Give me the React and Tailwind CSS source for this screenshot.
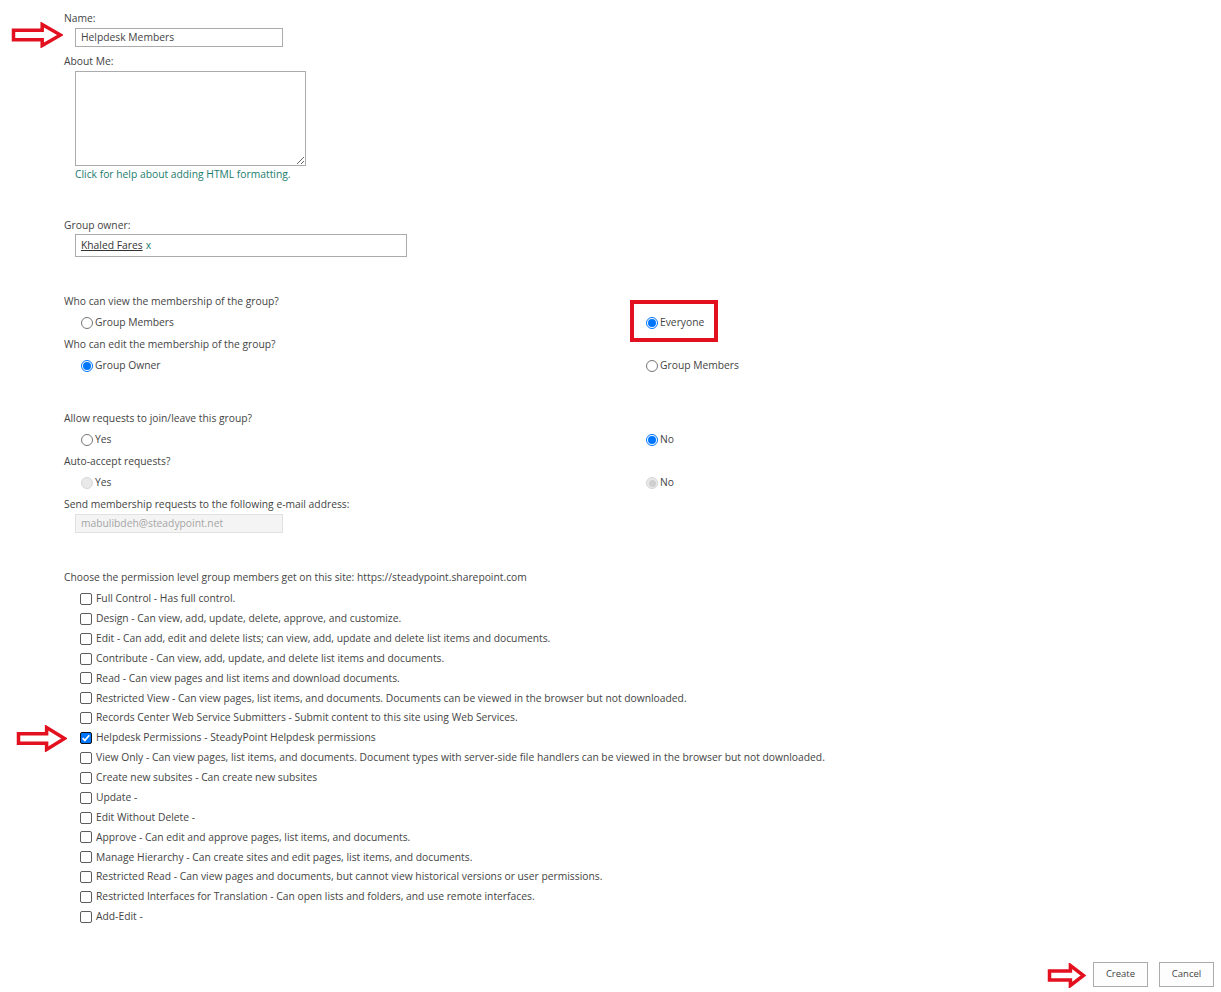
import React from "react";

const font = { fontFamily: '"Open Sans", "Noto Sans", sans-serif' };

function Arrow({ className, w = 52, h = 27 }) {
  return (
    <svg className={className} width={w} height={h} viewBox={`0 0 ${w} ${h}`}>
      <path
        d={`M2.5 ${h * 0.32} H${w * 0.6} V2.5 L${w - 2.5} ${h / 2} L${w * 0.6} ${h - 2.5} V${h * 0.68} H2.5 Z`}
        fill="#fff"
        stroke="#e3111f"
        strokeWidth="3.5"
        strokeLinejoin="miter"
      />
    </svg>
  );
}

function Radio({ checked, disabled, label }) {
  return (
    <div className="flex items-center h-[14px]">
      {disabled ? (
        <span className="w-[12px] h-[12px] rounded-full border border-[#d6d6d6] bg-[#e9e9e9] flex items-center justify-center">
          {checked && <span className="w-[7px] h-[7px] rounded-full bg-[#cfcfcf]" />}
        </span>
      ) : checked ? (
        <span className="w-[12px] h-[12px] rounded-full border border-[#0075ff] bg-white flex items-center justify-center">
          <span className="w-[8px] h-[8px] rounded-full bg-[#0075ff]" />
        </span>
      ) : (
        <span className="w-[12px] h-[12px] rounded-full border border-[#767676] bg-white" />
      )}
      <span className="ml-[2px] text-[#444]">{label}</span>
    </div>
  );
}

function Check({ checked, label }) {
  return (
    <div className="flex items-center h-[19.875px] pl-[16px]">
      {checked ? (
        <span className="w-[12px] h-[12px] rounded-[2px] bg-[#0075ff] border border-[#101010] flex items-center justify-center">
          <svg width="10" height="10" viewBox="0 0 10 10">
            <path d="M1.6 5.2 L3.9 7.4 L8.3 2.3" fill="none" stroke="#fff" strokeWidth="1.7" />
          </svg>
        </span>
      ) : (
        <span className="w-[12px] h-[12px] rounded-[2px] border border-[#5c5c5c] bg-white" />
      )}
      <span className="ml-[4px] text-[#444]">{label}</span>
    </div>
  );
}

const perms = [
  "Full Control - Has full control.",
  "Design - Can view, add, update, delete, approve, and customize.",
  "Edit - Can add, edit and delete lists; can view, add, update and delete list items and documents.",
  "Contribute - Can view, add, update, and delete list items and documents.",
  "Read - Can view pages and list items and download documents.",
  "Restricted View - Can view pages, list items, and documents. Documents can be viewed in the browser but not downloaded.",
  "Records Center Web Service Submitters - Submit content to this site using Web Services.",
  "Helpdesk Permissions - SteadyPoint Helpdesk permissions",
  "View Only - Can view pages, list items, and documents. Document types with server-side file handlers can be viewed in the browser but not downloaded.",
  "Create new subsites - Can create new subsites",
  "Update -",
  "Edit Without Delete -",
  "Approve - Can edit and approve pages, list items, and documents.",
  "Manage Hierarchy - Can create sites and edit pages, list items, and documents.",
  "Restricted Read - Can view pages and documents, but cannot view historical versions or user permissions.",
  "Restricted Interfaces for Translation - Can open lists and folders, and use remote interfaces.",
  "Add-Edit -",
];

function Label({ children, className = "" }) {
  return <div className={`h-[14px] leading-[14px] text-[#444] ${className}`}>{children}</div>;
}

function RadioRow({ left, right }) {
  return (
    <div className="flex h-[14px] mt-[8px]">
      <div className="w-[582px] pl-[17px]">{left}</div>
      <div>{right}</div>
    </div>
  );
}

export default function App() {
  return (
    <div className="relative w-[1221px] h-[992px] bg-white overflow-hidden text-[10.3px]" style={font}>
      <div className="pl-[64px] pt-[11px]">
        <Label>Name:</Label>
        <div className="mt-[3px] ml-[11px] w-[208px] h-[19px] border border-[#ababab] flex items-center pt-[1px] px-[5px] text-[#444]">
          Helpdesk Members
        </div>
        <Label className="mt-[7px]">About Me:</Label>
        <textarea
          className="block mt-[3px] ml-[11px] w-[231px] h-[95px] border border-[#ababab] outline-none"
          defaultValue=""
        />
        <div className="mt-[1px] ml-[11px] h-[14px] leading-[14px] text-[#1a7c6d]">
          Click for help about adding HTML formatting.
        </div>
        <Label className="mt-[37px]">Group owner:</Label>
        <div className="mt-[2px] ml-[11px] w-[332px] h-[23px] border border-[#ababab] flex items-center px-[5px]">
          <span className="underline text-[#333]">Khaled Fares</span>
          <span className="ml-[3px] text-[#1a7c6d]">x</span>
        </div>

        <Label className="mt-[37px]">Who can view the membership of the group?</Label>
        <RadioRow
          left={<Radio label="Group Members" />}
          right={<Radio checked label="Everyone" />}
        />
        <Label className="mt-[7px]">Who can edit the membership of the group?</Label>
        <RadioRow
          left={<Radio checked label="Group Owner" />}
          right={<Radio label="Group Members" />}
        />

        <Label className="mt-[38px]">Allow requests to join/leave this group?</Label>
        <RadioRow left={<Radio label="Yes" />} right={<Radio checked label="No" />} />
        <Label className="mt-[7px]">Auto-accept requests?</Label>
        <RadioRow left={<Radio disabled label="Yes" />} right={<Radio disabled checked label="No" />} />
        <Label className="mt-[7px]">Send membership requests to the following e-mail address:</Label>
        <div className="mt-[3px] ml-[11px] w-[208px] h-[19px] border border-[#e1e1e1] bg-[#f4f4f4] flex items-center pt-[1px] px-[5px] text-[#a6a6a6]">
          mabulibdeh@steadypoint.net
        </div>

        <Label className="mt-[37px]">
          Choose the permission level group members get on this site: https://steadypoint.sharepoint.com
        </Label>
        <div className="mt-[5px]">
          {perms.map((p, i) => (
            <Check key={i} checked={i === 7} label={p} />
          ))}
        </div>

        <div className="flex justify-end gap-[11px] pr-[7px] mt-[35px]">
          <button className="w-[55px] h-[25px] border border-[#ababab] bg-[#fdfdfd] text-[#444] text-[9.5px]">
            Create
          </button>
          <button className="w-[55px] h-[25px] border border-[#ababab] bg-[#fdfdfd] text-[#444] text-[9.5px]">
            Cancel
          </button>
        </div>
      </div>

      <div className="absolute left-[630px] top-[300px] w-[88px] h-[42px] border-[4px] border-[#e3111f]" />
      <Arrow className="absolute left-[11px] top-[22px]" w={52} h={26} />
      <Arrow className="absolute left-[16px] top-[725px]" w={51} h={27} />
      <Arrow className="absolute left-[1047px] top-[963px]" w={39} h={25} />
    </div>
  );
}
